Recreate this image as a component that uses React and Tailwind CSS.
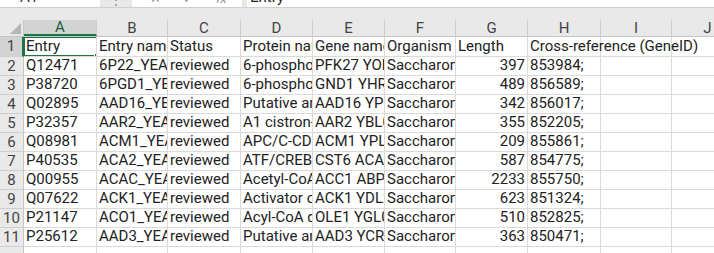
import React from "react";

const cols = ["A", "B", "C", "D", "E", "F", "G", "H", "I", "J"];
const widths = [73, 71, 73, 72, 72, 71, 72, 73, 71, 72];

const rows = [
  ["Entry", "Entry name", "Status", "Protein names", "Gene names", "Organism", "Length", "Cross-reference (GeneID)"],
  ["Q12471", "6P22_YEAST", "reviewed", "6-phosphofructo-2-kinase 2", "PFK27 YOL136C", "Saccharomyces cerevisiae", "397", "853984;"],
  ["P38720", "6PGD1_YEAST", "reviewed", "6-phosphogluconate dehydrogenase", "GND1 YHR183W", "Saccharomyces cerevisiae", "489", "856589;"],
  ["Q02895", "AAD16_YEAST", "reviewed", "Putative aryl-alcohol dehydrogenase", "AAD16 YPL088W", "Saccharomyces cerevisiae", "342", "856017;"],
  ["P32357", "AAR2_YEAST", "reviewed", "A1 cistron-splicing factor AAR2", "AAR2 YBL074C", "Saccharomyces cerevisiae", "355", "852205;"],
  ["Q08981", "ACM1_YEAST", "reviewed", "APC/C-CDH1 modulator 1", "ACM1 YPL267W", "Saccharomyces cerevisiae", "209", "855861;"],
  ["P40535", "ACA2_YEAST", "reviewed", "ATF/CREB activator 2", "CST6 ACA2 YIL036W", "Saccharomyces cerevisiae", "587", "854775;"],
  ["Q00955", "ACAC_YEAST", "reviewed", "Acetyl-CoA carboxylase", "ACC1 ABP2 FAS3", "Saccharomyces cerevisiae", "2233", "855750;"],
  ["Q07622", "ACK1_YEAST", "reviewed", "Activator of C kinase protein 1", "ACK1 YDL203C", "Saccharomyces cerevisiae", "623", "851324;"],
  ["P21147", "ACO1_YEAST", "reviewed", "Acyl-CoA desaturase 1", "OLE1 YGL055W", "Saccharomyces cerevisiae", "510", "852825;"],
  ["P25612", "AAD3_YEAST", "reviewed", "Putative aryl-alcohol dehydrogenase", "AAD3 YCR107W", "Saccharomyces cerevisiae", "363", "850471;"],
];

function Cell({ value, col, row, width }) {
  const numeric = row > 0 && col === 6;
  const spill = row === 0 && col === 7; // neighbours empty, text runs on
  return (
    <div
      className={`relative shrink-0 border-r border-b border-[#dadada] flex items-end pb-[1px] whitespace-nowrap ${
        spill ? "overflow-visible z-10" : "overflow-hidden"
      } ${numeric ? "justify-end pr-[2px]" : "pl-[2px]"}`}
      style={{ width }}
    >
      <span className="leading-[17px]">{value}</span>
      {row === 0 && col === 0 && (
        <div className="absolute -left-[1px] -top-[1px] w-[75px] h-[21px] border-2 border-[#217346]">
          <div className="absolute -right-[4px] -bottom-[4px] w-[6px] h-[6px] bg-[#217346] border border-white" />
        </div>
      )}
    </div>
  );
}

export default function App() {
  return (
    <div
      className="w-[714px] h-[253px] overflow-hidden bg-white text-[#222] text-[15px]"
      style={{ fontFamily: 'Roboto, "Liberation Sans", Arial, sans-serif' }}
    >
      {/* formula bar, mostly scrolled out of view */}
      <div className="h-[20px] bg-[#e9e9e9] flex flex-col">
        <div className="h-[8px] flex overflow-hidden border-b border-[#cfcfcf]">
          <div className="w-[100px] bg-white flex items-end pl-[20px]">
            <span className="mb-[1px] leading-[17px] text-[#333]">A1</span>
          </div>
          <div className="w-[32px] flex justify-center items-end text-[#888] text-[12px]">
            <span className="mb-0 leading-[14px]">⋮</span>
          </div>
          <div className="w-[110px] bg-white flex items-end gap-[22px] pl-[18px] text-[#999] text-[13px]">
            <span className="mb-[1px] leading-[14px]">✕</span>
            <span className="mb-[1px] leading-[14px]">✓</span>
            <span className="mb-[1px] leading-[14px] italic">fx</span>
          </div>
          <div className="w-[5px]" />
          <div className="flex-1 bg-white flex items-end pl-[3px]">
            <span className="mb-[1px] leading-[17px]">Entry</span>
          </div>
        </div>
      </div>

      {/* column headers */}
      <div className="flex h-[17px] bg-[#e9e9e9] text-[#444] border-b border-[#c6c6c6]">
        <div className="w-[24px] shrink-0 border-r border-[#c6c6c6] flex items-end justify-end p-[2px]">
          <div className="w-0 h-0 border-l-[11px] border-l-transparent border-b-[11px] border-b-[#b5b5b5]" />
        </div>
        {cols.map((c, i) => (
          <div
            key={c}
            className={`shrink-0 flex items-center justify-center border-r border-[#cfcfcf] leading-none ${
              i === 0 ? "bg-[#d3d3d3] border-b-2 border-b-[#217346] text-[#1d5f3a]" : ""
            }`}
            style={{ width: widths[i] }}
          >
            {c}
          </div>
        ))}
      </div>

      {/* rows */}
      {rows.map((r, ri) => (
        <div key={ri} className={`flex ${ri === 0 ? "h-[20px]" : "h-[19px]"}`}>
          <div
            className={`w-[24px] shrink-0 flex items-center justify-center text-[#444] border-b border-[#cfcfcf] ${
              ri === 0 ? "bg-[#d3d3d3] border-r-2 border-r-[#217346]" : "bg-[#e9e9e9] border-r border-r-[#c6c6c6]"
            }`}
          >
            {ri + 1}
          </div>
          {cols.map((c, ci) => (
            <Cell key={c} value={r[ci] || ""} col={ci} row={ri} width={widths[ci]} />
          ))}
        </div>
      ))}
      <div className="flex h-[19px]">
        <div className="w-[24px] shrink-0 bg-[#e9e9e9] border-r border-[#c6c6c6]" />
        {cols.map((c, ci) => (
          <div key={c} className="shrink-0 border-r border-[#dadada]" style={{ width: widths[ci] }} />
        ))}
      </div>
    </div>
  );
}
